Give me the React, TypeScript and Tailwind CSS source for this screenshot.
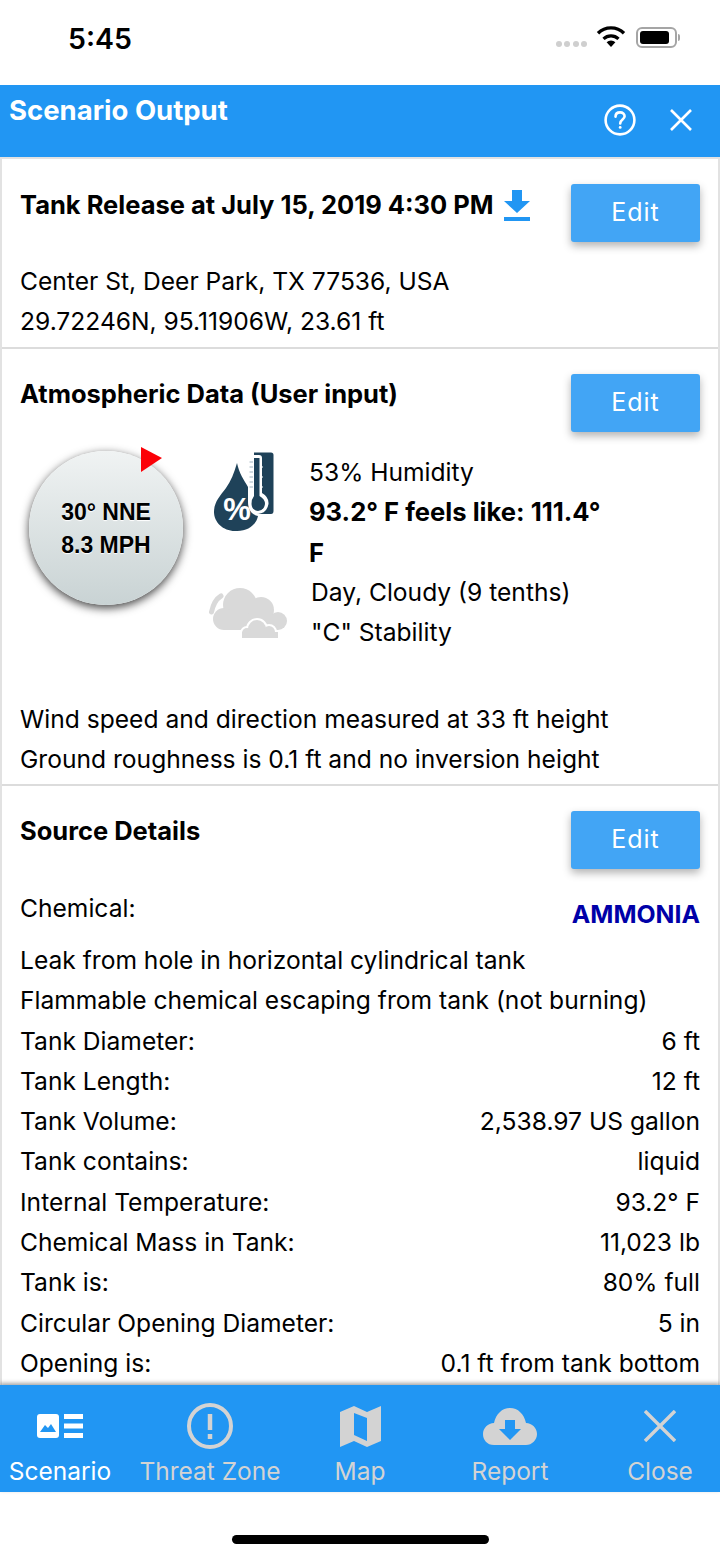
import type { ReactNode } from 'react'

const sourceRows = [
  ['Tank Diameter:', '6 ft'],
  ['Tank Length:', '12 ft'],
  ['Tank Volume:', '2,538.97 US gallon'],
  ['Tank contains:', 'liquid'],
  ['Internal Temperature:', '93.2° F'],
  ['Chemical Mass in Tank:', '11,023 lb'],
  ['Tank is:', '80% full'],
  ['Circular Opening Diameter:', '5 in'],
  ['Opening is:', '0.1 ft from tank bottom'],
]

function EditButton() {
  return (
    <button
      type="button"
      className="flex h-[58px] w-[129px] shrink-0 items-center justify-center rounded-[3px] bg-[#42a5f5] text-[25px] tracking-[1px] text-white shadow-[0_4px_8px_rgba(0,0,0,0.3)]"
    >
      Edit
    </button>
  )
}

function Line({ children, className = '' }: { children: ReactNode; className?: string }) {
  return <p className={`h-[40.3px] text-[24.6px] leading-[40.3px] whitespace-nowrap ${className}`}>{children}</p>
}

function StatusBar() {
  return (
    <div className="flex h-[85px] shrink-0 items-start justify-between pt-[21px] pr-[40px] pl-[68px]">
      <span className="text-[28.5px] leading-[36px] font-semibold text-black">5:45</span>
      <div className="flex items-center pt-[5px]">
        <div className="mt-[13px] mr-[9px] flex gap-[2.5px]">
          <span className="h-[6px] w-[6px] rounded-full bg-[#cfcfcf]" />
          <span className="h-[6px] w-[6px] rounded-full bg-[#cfcfcf]" />
          <span className="h-[6px] w-[6px] rounded-full bg-[#cfcfcf]" />
          <span className="h-[6px] w-[6px] rounded-full bg-[#cfcfcf]" />
        </div>
        <svg width="30" height="22" viewBox="0 0 30 22">
          <path d="M15 21 L10.6 16.2 A6.5 6.5 0 0 1 19.4 16.2 Z" fill="#000" />
          <path d="M7.5 12.8 A11 11 0 0 1 22.5 12.8" fill="none" stroke="#000" strokeWidth="3.2" />
          <path d="M2 7.2 A18.5 18.5 0 0 1 28 7.2" fill="none" stroke="#000" strokeWidth="3.4" />
        </svg>
        <div className="ml-[10px] flex items-center">
          <div className="flex h-[21px] w-[41px] items-center rounded-[6px] border-2 border-[#a5a5a5] p-[2px]">
            <div className="h-full w-[29px] rounded-[3px] bg-black" />
          </div>
          <div className="ml-[1px] h-[7px] w-[2px] rounded-r-full bg-[#a5a5a5]" />
        </div>
      </div>
    </div>
  )
}

function Header() {
  return (
    <div className="flex h-[72px] shrink-0 justify-between bg-[#2196f3] text-white">
      <h1 className="pt-[7px] pl-[9px] text-[27.5px] leading-[36px] font-bold">Scenario Output</h1>
      <div className="flex items-start gap-[33px] pt-[19px] pr-[27px]">
        <svg width="32" height="32" viewBox="0 0 32 32" fill="none" stroke="#fff" strokeWidth="2.6">
          <circle cx="16" cy="16" r="14.4" />
          <path d="M11.5 12.6 C11.6 9.8 13.6 8.4 16.1 8.4 C18.7 8.4 20.6 10 20.6 12.3 C20.6 15.5 16.2 15.6 16.2 19.4" strokeLinecap="round" />
          <circle cx="16.2" cy="23.4" r="1.4" fill="#fff" stroke="none" />
        </svg>
        <svg className="mt-[4px]" width="24" height="24" viewBox="0 0 24 24" fill="none" stroke="#fff" strokeWidth="2.6">
          <path d="M2 2 L22 22 M22 2 L2 22" />
        </svg>
      </div>
    </div>
  )
}

function WindDial() {
  return (
    <div className="relative mt-[19px] ml-[9px] flex h-[154px] w-[154px] shrink-0 flex-col items-center justify-center rounded-full bg-gradient-to-b from-[#f0f3f3] to-[#c9d3d4] pt-[2px] font-['Liberation_Sans',sans-serif] text-[23px] leading-[33px] font-bold text-black shadow-[0_3px_10px_rgba(0,0,0,0.75)]">
      <span className="[text-shadow:0_1px_1px_#fff]">30° NNE</span>
      <span className="[text-shadow:0_1px_1px_#fff]">8.3 MPH</span>
      <svg className="absolute top-[-4px] left-[112px]" width="21" height="25" viewBox="0 0 21 25">
        <path d="M0 0 L21 11 L0 25 Z" fill="#fb0007" />
      </svg>
    </div>
  )
}

function HumidityIcon() {
  return (
    <svg width="60" height="80" viewBox="0 0 60 80" className="ml-[5px] shrink-0">
      <path d="M40 0.5 H57 Q59.5 0.5 59.5 3 V59 Q59.5 62 57 62 H43 V40 H47 V4 H40 Z" fill="#1f4259" />
      <path d="M34 6 Q34 3 37 3 H45 Q48 3 48 6 V41 Q55 45 54.5 52 Q53 61 44 62 Q35 61 34 52 Z" fill="#fff" />
      <path d="M40 6 H45.5 V44 Q51 47 51 52 Q50 58.5 44 59 Q38 58.5 37.5 52 Q37.5 47 40 44 Z" fill="#1f4259" />
      <path d="M46 10 H48 M46 15 H49 M46 20 H48 M46 25 H49 M46 30 H48 M46 35 H49" stroke="#fff" strokeWidth="1" />
      <path d="M35.5 10 H39 M35.5 15 H39 M35.5 20 H39 M35.5 25 H39 M35.5 30 H39 M35.5 35 H39" stroke="#9fb2be" strokeWidth="1" />
      <path d="M23 11 C25 21 30 28 34 35 L34 50 C34 58 38 63 44 64 C42 74 32 80 21 79 C9 79 0 70 0 60 C0 50 6 44 12 36 C17 29 20 21 23 11 Z" fill="#1f4259" />
      <text x="23" y="68" textAnchor="middle" fontFamily="'Liberation Sans', sans-serif" fontWeight="700" fontSize="31" fill="#fff">%</text>
    </svg>
  )
}

function CloudIcon() {
  return (
    <svg width="78" height="50" viewBox="0 0 78 50" className="shrink-0">
      <path d="M12 8 C7 11 4 17 2.5 24" fill="none" stroke="#d9d9d9" strokeWidth="5" strokeLinecap="round" />
      <g fill="#d9d9d9">
        <circle cx="31" cy="17" r="17" />
        <circle cx="52" cy="22" r="13" />
        <circle cx="69" cy="33" r="9" />
        <circle cx="15" cy="31" r="11" />
        <rect x="15" y="28" width="54" height="14" />
      </g>
      <g fill="#fff" stroke="#fff" strokeWidth="4">
        <circle cx="48" cy="41" r="9" />
        <circle cx="60" cy="44" r="6" />
        <circle cx="38" cy="45" r="5" />
      </g>
      <g fill="#d9d9d9">
        <circle cx="48" cy="41" r="9" />
        <circle cx="60" cy="44" r="6" />
        <circle cx="38" cy="45" r="5" />
        <rect x="33" y="44" width="36" height="6" />
      </g>
    </svg>
  )
}

function TabItem({
  icon,
  label,
  active = false,
}: {
  icon: ReactNode
  label: string
  active?: boolean
}) {
  return (
    <div className="flex w-[150px] shrink-0 flex-col items-center">
      <div className="flex h-[64px] items-center justify-center">{icon}</div>
      <span className={`-mt-[3px] text-[24.5px] leading-[32px] ${active ? 'text-white' : 'text-[#d3d3d3]'}`}>{label}</span>
    </div>
  )
}

function TabBar() {
  return (
    <div className="relative flex h-[107px] shrink-0 justify-center bg-[#2196f3] pt-[9px] shadow-[0_-2px_4px_rgba(0,0,0,0.35)]">
      <TabItem
        active
        label="Scenario"
        icon={
          <svg width="46" height="24" viewBox="0 0 46 24">
            <path d="M3 0 H19 Q22 0 22 3 V21 Q22 24 19 24 H3 Q0 24 0 21 V3 Q0 0 3 0 Z" fill="#fff" />
            <path d="M3 18 L8 11 L11 14 L14 10 L19 18 Z" fill="#2196f3" />
            <path d="M27 0 H46 V5 H27 Z M27 9.5 H46 V14.5 H27 Z M27 19 H46 V24 H27 Z" fill="#fff" />
          </svg>
        }
      />
      <TabItem
        label="Threat Zone"
        icon={
          <svg width="46" height="46" viewBox="0 0 46 46" fill="none" stroke="#d3d3d3" strokeWidth="4">
            <circle cx="23" cy="23" r="21" />
            <path d="M23 11 V27" strokeWidth="4.5" />
            <path d="M23 31 V36" strokeWidth="4.5" />
          </svg>
        }
      />
      <TabItem
        label="Map"
        icon={
          <svg width="41" height="41" viewBox="0 0 41 41" fill="#d3d3d3">
            <path fillRule="evenodd" d="M0 6 L14 0 L27 6 L41 0 V35 L27 41 L14 35 L0 41 Z M14 7 V29 L27 35 V12 Z" />
          </svg>
        }
      />
      <TabItem
        label="Report"
        icon={
          <svg width="54" height="37" viewBox="0 0 54 37">
            <path
              fillRule="evenodd"
              fill="#d3d3d3"
              d="M11 37 C4 37 0 32 0 26 C0 20 5 15 11 15 C13 6 19 0 27 0 C35 0 41 6 43 15 C49 15 54 20 54 26 C54 32 49 37 43 37 Z M22 12 V21 H16 L27 32 L38 21 H32 V12 Z"
            />
          </svg>
        }
      />
      <TabItem
        label="Close"
        icon={
          <svg width="32" height="32" viewBox="0 0 32 32" fill="none" stroke="#d3d3d3" strokeWidth="3.4">
            <path d="M1 1 L31 31 M31 1 L1 31" />
          </svg>
        }
      />
    </div>
  )
}

export default function App() {
  return (
    <div className="flex h-[1558px] w-[720px] flex-col overflow-hidden bg-white font-['Inter','Noto_Sans',sans-serif] text-black">
      <StatusBar />
      <Header />

      <main className="min-h-0 flex-1 overflow-hidden border-x-2 border-t-2 border-[#e2e2e2]">
        <section className="h-[190px] border-b-2 border-[#dcdcdc] px-[18px] pt-[25px]">
          <div className="flex items-start justify-between">
            <div className="flex items-center gap-[9px] pt-[3px]">
              <h2 className="text-[25.5px] leading-[36px] font-bold whitespace-nowrap">Tank Release at July 15, 2019 4:30 PM</h2>
              <svg width="28" height="32" viewBox="0 0 28 32" className="mt-[2px]">
                <path d="M9 0 H19 V11 H27 L14 23 L1 11 H9 Z M1 27 H27 V31 H1 Z" fill="#2196f3" />
              </svg>
            </div>
            <EditButton />
          </div>
          <div className="mt-[19px]">
            <Line>Center St, Deer Park, TX 77536, USA</Line>
            <Line>29.72246N, 95.11906W, 23.61 ft</Line>
          </div>
        </section>

        <section className="h-[437px] border-b-2 border-[#dcdcdc] px-[18px] pt-[25px]">
          <div className="flex items-start justify-between">
            <h2 className="pt-[2px] text-[25.5px] leading-[36px] font-bold">Atmospheric Data (User input)</h2>
            <EditButton />
          </div>
          <div className="flex h-[268px]">
            <WindDial />
            <div className="ml-[26px] flex-1">
              <div className="flex gap-[35px] pt-[20px]">
                <HumidityIcon />
                <div className="w-[305px] text-[24.6px] leading-[40.3px]">
                  <p>53% Humidity</p>
                  <p className="text-[25.6px] font-bold">93.2° F feels like: 111.4° F</p>
                </div>
              </div>
              <div className="mt-[-1px] flex gap-[24px]">
                <div className="pt-[16px]">
                  <CloudIcon />
                </div>
                <div className="text-[24.6px] leading-[40.3px]">
                  <p>Day, Cloudy (9 tenths)</p>
                  <p>"C" Stability</p>
                </div>
              </div>
            </div>
          </div>
          <div className="mt-[-1px]">
            <Line>Wind speed and direction measured at 33 ft height</Line>
            <Line>Ground roughness is 0.1 ft and no inversion height</Line>
          </div>
        </section>

        <section className="px-[18px] pt-[25px]">
          <div className="flex items-start justify-between">
            <h2 className="pt-[2px] text-[25.5px] leading-[36px] font-bold">Source Details</h2>
            <EditButton />
          </div>
          <div className="flex items-start justify-between pt-[19px]">
            <Line>Chemical:</Line>
            <span className="pt-[8px] text-[24.8px] leading-[36px] font-bold text-[#0000a8]">AMMONIA</span>
          </div>
          <div className="mt-[8px]">
            <Line>Leak from hole in horizontal cylindrical tank</Line>
            <Line>Flammable chemical escaping from tank (not burning)</Line>
            {sourceRows.map(([name, value]) => (
              <div key={name} className="flex justify-between">
                <Line>{name}</Line>
                <Line>{value}</Line>
              </div>
            ))}
          </div>
        </section>
      </main>

      <TabBar />

      <div className="flex h-[66px] shrink-0 justify-center pt-[43px]">
        <div className="h-[9px] w-[257px] rounded-full bg-black" />
      </div>
    </div>
  )
}
